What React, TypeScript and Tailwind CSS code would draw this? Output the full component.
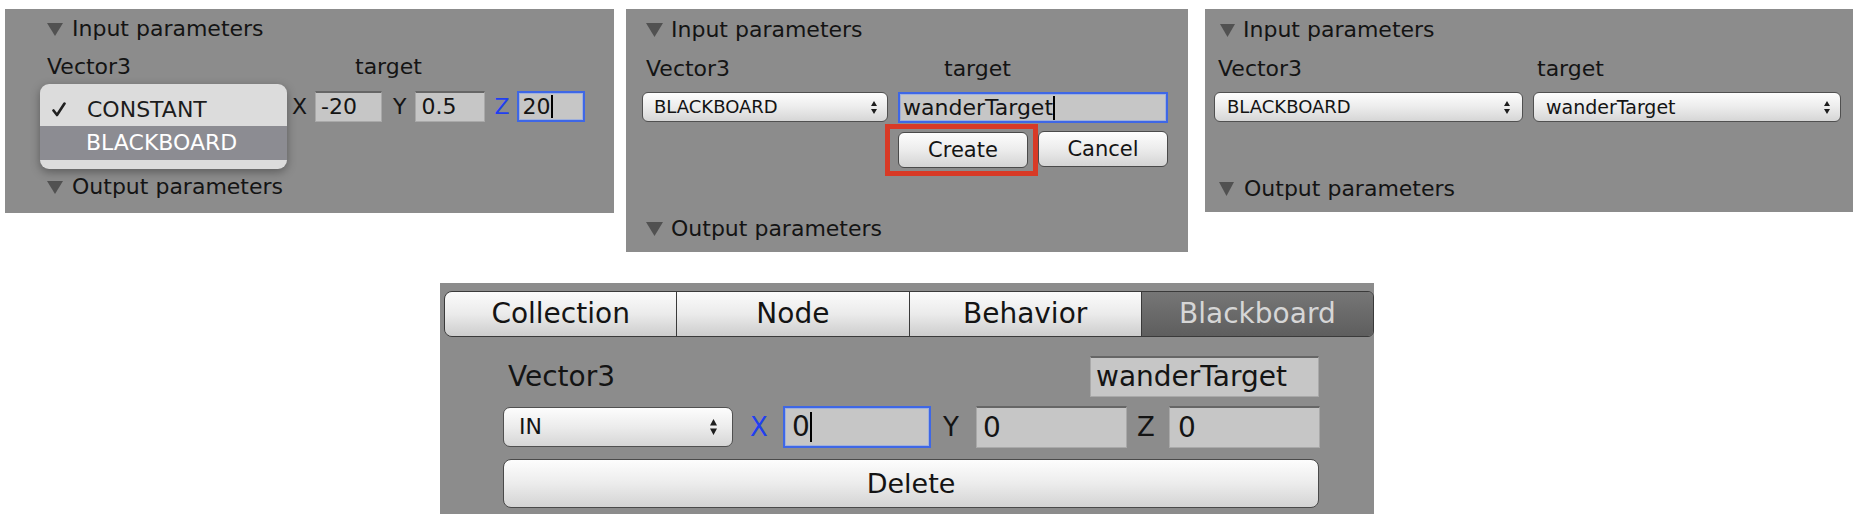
import React from "react";

function Tri({ w = 15, h = 13 }: { w?: number; h?: number }) {
  return (
    <svg width={w} height={h} viewBox={`0 0 ${w} ${h}`} className="shrink-0">
      <path d={`M0 0 L${w} 0 L${w / 2} ${h} Z`} fill="#515151" />
    </svg>
  );
}

function Arrows({ w = 6, h = 13 }: { w?: number; h?: number }) {
  const m = h / 2;
  return (
    <svg width={w} height={h} viewBox={`0 0 ${w} ${h}`} className="shrink-0">
      <path
        d={`M${w / 2} 0 L${w} ${m - 1.5} L0 ${m - 1.5} Z M${w / 2} ${h} L${w} ${m + 1.5} L0 ${m + 1.5} Z`}
        fill="#1e1e1e"
      />
    </svg>
  );
}

function Cursor({ h = 22 }: { h?: number }) {
  return <span className="inline-block w-[2px] bg-black align-middle" style={{ height: h }} />;
}

export default function App() {
  return (
    <div className="w-[1862px] h-[528px] bg-white font-['DejaVu_Sans','Liberation_Sans',sans-serif] text-[#141414] overflow-hidden">
      <div className="flex items-start pt-[9px] pl-[5px]">
        {/* Panel 1 */}
        <div className="relative w-[609px] h-[204px] bg-[#8c8c8c] pt-[7px]">
          <div className="pl-[42px]">
            <div className="flex items-center gap-[9px] h-[26px] text-[22px] leading-[26px] whitespace-nowrap">
              <Tri w={16} h={13} />
              <span>Input parameters</span>
            </div>
          </div>
          <div className="mt-[12px] flex h-[26px] pl-[42px] text-[22px] leading-[26px]">
            <span className="w-[308px]">Vector3</span>
            <span>target</span>
          </div>
          <div className="mt-[11px] flex items-center h-[31px]">
            <div className="relative w-[287px] self-stretch">
              <div className="absolute left-[35px] top-[-7px] w-[247px] rounded-[9px] bg-[#dcdcdc] py-[9px] shadow-[0_3px_10px_rgba(0,0,0,0.35)] overflow-hidden">
                <div className="flex items-center h-[33px] text-[22px] leading-[26px] text-[#1c1c1c]">
                  <svg width="14" height="15" viewBox="0 0 14 15" className="ml-[12px] shrink-0">
                    <path d="M1.5 8.5 L5 13 L12.5 1.5" stroke="#202020" strokeWidth="2.6" fill="none" strokeLinecap="round" strokeLinejoin="round" />
                  </svg>
                  <span className="ml-[21px]">CONSTANT</span>
                </div>
                <div className="flex items-center h-[34px] bg-[#8c8c92] text-[22px] leading-[26px] text-white pl-[46px]">
                  BLACKBOARD
                </div>
              </div>
            </div>
            <span className="text-[22px] leading-[26px]">X</span>
            <div className="ml-[8px] w-[67px] h-[31px] bg-[#c6c6c6] border border-[#a9a9a9] border-t-2 border-t-[#666] pl-[5px] flex items-center text-[22px] leading-[26px]">-20</div>
            <span className="ml-[11px] text-[22px] leading-[26px]">Y</span>
            <div className="ml-[8px] w-[70px] h-[31px] bg-[#c6c6c6] border border-[#a9a9a9] border-t-2 border-t-[#666] pl-[6px] flex items-center text-[22px] leading-[26px]">0.5</div>
            <span className="ml-[10px] text-[22px] leading-[26px] text-[#1f3ff0]">Z</span>
            <div className="ml-[7px] w-[68px] h-[31px] bg-[#c6c6c6] border-2 border-[#3e67e6] shadow-[inset_0_0_0_1px_#9fb0dc] pl-[4px] flex items-center text-[22px] leading-[26px]">
              20
              <Cursor h={23} />
            </div>
          </div>
          <div className="mt-[52px] pl-[42px]">
            <div className="flex items-center gap-[9px] h-[26px] text-[22px] leading-[26px] whitespace-nowrap">
              <Tri w={16} h={13} />
              <span>Output parameters</span>
            </div>
          </div>
        </div>

        {/* Panel 2 */}
        <div className="relative ml-[12px] w-[562px] h-[243px] bg-[#8c8c8c] pt-[8px]">
          <div className="pl-[20px] flex items-center gap-[8px] h-[26px] text-[22px] leading-[26px] whitespace-nowrap">
            <Tri w={17} h={14} />
            <span>Input parameters</span>
          </div>
          <div className="mt-[13px] flex h-[26px] pl-[20px] text-[22px] leading-[26px]">
            <span className="w-[298px]">Vector3</span>
            <span>target</span>
          </div>
          <div className="mt-[10px] flex items-start pl-[16px]">
            <div className="w-[246px] h-[30px] rounded-[6px] border border-[#505050] bg-gradient-to-b from-[#fdfdfd] via-[#ececec] to-[#d6d6d6] flex items-center pl-[11px] pr-[10px] text-[18px] leading-[20px]">
              <span className="flex-1">BLACKBOARD</span>
              <Arrows />
            </div>
            <div className="ml-[10px] w-[270px] h-[31px] bg-[#c6c6c6] border-2 border-[#3e67e6] shadow-[inset_0_0_0_1px_#9fb0dc] pl-[3px] flex items-center text-[22px] leading-[26px]">
              wanderTarget
              <Cursor h={24} />
            </div>
          </div>
          <div className="mt-[9px] flex items-start pl-[272px]">
            <div className="w-[130px] h-[36px] rounded-[6px] border border-[#4a4a4a] bg-gradient-to-b from-[#fdfdfd] via-[#ececec] to-[#d4d4d4] flex items-center justify-center text-[21px] leading-[26px]">
              Create
            </div>
            <div className="ml-[10px] -mt-[1px] w-[130px] h-[36px] rounded-[6px] border border-[#4a4a4a] bg-gradient-to-b from-[#fdfdfd] via-[#ececec] to-[#d4d4d4] flex items-center justify-center text-[21px] leading-[26px]">
              Cancel
            </div>
          </div>
          <div className="absolute left-[259px] top-[115px] w-[153px] h-[52px] border-[5px] border-[#d83a26]" />
          <div className="mt-[48px] pl-[20px] flex items-center gap-[8px] h-[26px] text-[22px] leading-[26px] whitespace-nowrap">
            <Tri w={17} h={14} />
            <span>Output parameters</span>
          </div>
        </div>

        {/* Panel 3 */}
        <div className="ml-[17px] w-[648px] h-[203px] bg-[#8c8c8c] pt-[8px]">
          <div className="pl-[15px] flex items-center gap-[8px] h-[26px] text-[22px] leading-[26px] whitespace-nowrap">
            <Tri w={15} h={13} />
            <span>Input parameters</span>
          </div>
          <div className="mt-[13px] flex h-[26px] pl-[13px] text-[22px] leading-[26px]">
            <span className="w-[319px]">Vector3</span>
            <span>target</span>
          </div>
          <div className="mt-[10px] flex items-start pl-[9px]">
            <div className="w-[309px] h-[30px] rounded-[6px] border border-[#505050] bg-gradient-to-b from-[#fdfdfd] via-[#ececec] to-[#d6d6d6] flex items-center pl-[12px] pr-[12px] text-[18px] leading-[20px]">
              <span className="flex-1">BLACKBOARD</span>
              <Arrows />
            </div>
            <div className="ml-[10px] w-[308px] h-[30px] rounded-[6px] border border-[#505050] bg-gradient-to-b from-[#fdfdfd] via-[#ececec] to-[#d6d6d6] flex items-center pl-[12px] pr-[10px] text-[19px] leading-[22px]">
              <span className="flex-1">wanderTarget</span>
              <Arrows />
            </div>
          </div>
          <div className="mt-[54px] pl-[14px] flex items-center gap-[10px] h-[26px] text-[22px] leading-[26px] whitespace-nowrap">
            <Tri w={15} h={14} />
            <span>Output parameters</span>
          </div>
        </div>
      </div>

      {/* Bottom panel */}
      <div className="mt-[31px] ml-[440px] w-[934px] h-[231px] bg-[#8c8c8c] pt-[8px]">
        <div className="pl-[4px]">
          <div className="flex h-[46px] rounded-l-[8px] rounded-r-[6px] border border-[#3a3a3a] overflow-hidden text-[28px] leading-[32px]">
            <div className="flex-1 flex items-center justify-center bg-gradient-to-b from-[#fbfbfb] via-[#ebebeb] to-[#cdcdcd]">Collection</div>
            <div className="flex-1 flex items-center justify-center border-l border-[#3a3a3a] bg-gradient-to-b from-[#fbfbfb] via-[#ebebeb] to-[#cdcdcd]">Node</div>
            <div className="flex-1 flex items-center justify-center border-l border-[#3a3a3a] bg-gradient-to-b from-[#fbfbfb] via-[#ebebeb] to-[#cdcdcd]">Behavior</div>
            <div className="flex-1 flex items-center justify-center border-l border-[#3a3a3a] bg-gradient-to-b from-[#767676] to-[#5e5e5e] text-[#d6d6d6]">Blackboard</div>
          </div>
        </div>
        <div className="mt-[19px] flex items-center h-[41px] pl-[68px] pr-[55px]">
          <span className="text-[28px] leading-[32px]">Vector3</span>
          <div className="ml-auto w-[229px] h-[41px] bg-[#c6c6c6] border border-[#a9a9a9] border-t-2 border-t-[#666] pl-[5px] flex items-center text-[28px] leading-[32px]">
            wanderTarget
          </div>
        </div>
        <div className="mt-[9px] flex items-center h-[42px] pl-[63px]">
          <div className="w-[230px] h-[40px] rounded-[7px] border border-[#505050] bg-gradient-to-b from-[#fdfdfd] via-[#ececec] to-[#d6d6d6] flex items-center pl-[15px] pr-[15px] text-[22px] leading-[26px]">
            <span className="flex-1">IN</span>
            <Arrows w={7} h={16} />
          </div>
          <span className="w-[50px] pl-[17px] text-[26px] leading-[30px] text-[#1f3ff0]">X</span>
          <div className="w-[148px] h-[42px] bg-[#c6c6c6] border-2 border-[#3e67e6] shadow-[inset_0_0_0_1px_#9fb0dc] pl-[7px] flex items-center text-[28px] leading-[32px]">
            0
            <Cursor h={30} />
          </div>
          <span className="w-[45px] pl-[12px] text-[26px] leading-[30px]">Y</span>
          <div className="w-[151px] h-[42px] bg-[#c6c6c6] border border-[#a9a9a9] border-t-2 border-t-[#666] pl-[6px] flex items-center text-[28px] leading-[32px]">0</div>
          <span className="w-[42px] pl-[10px] text-[26px] leading-[30px]">Z</span>
          <div className="w-[151px] h-[42px] bg-[#c6c6c6] border border-[#a9a9a9] border-t-2 border-t-[#666] pl-[8px] flex items-center text-[28px] leading-[32px]">0</div>
        </div>
        <div className="mt-[11px] ml-[63px] w-[816px] h-[49px] rounded-[8px] border border-[#4a4a4a] bg-gradient-to-b from-[#fdfdfd] via-[#ececec] to-[#d4d4d4] flex items-center justify-center text-[27px] leading-[32px]">
          Delete
        </div>
      </div>
    </div>
  );
}
